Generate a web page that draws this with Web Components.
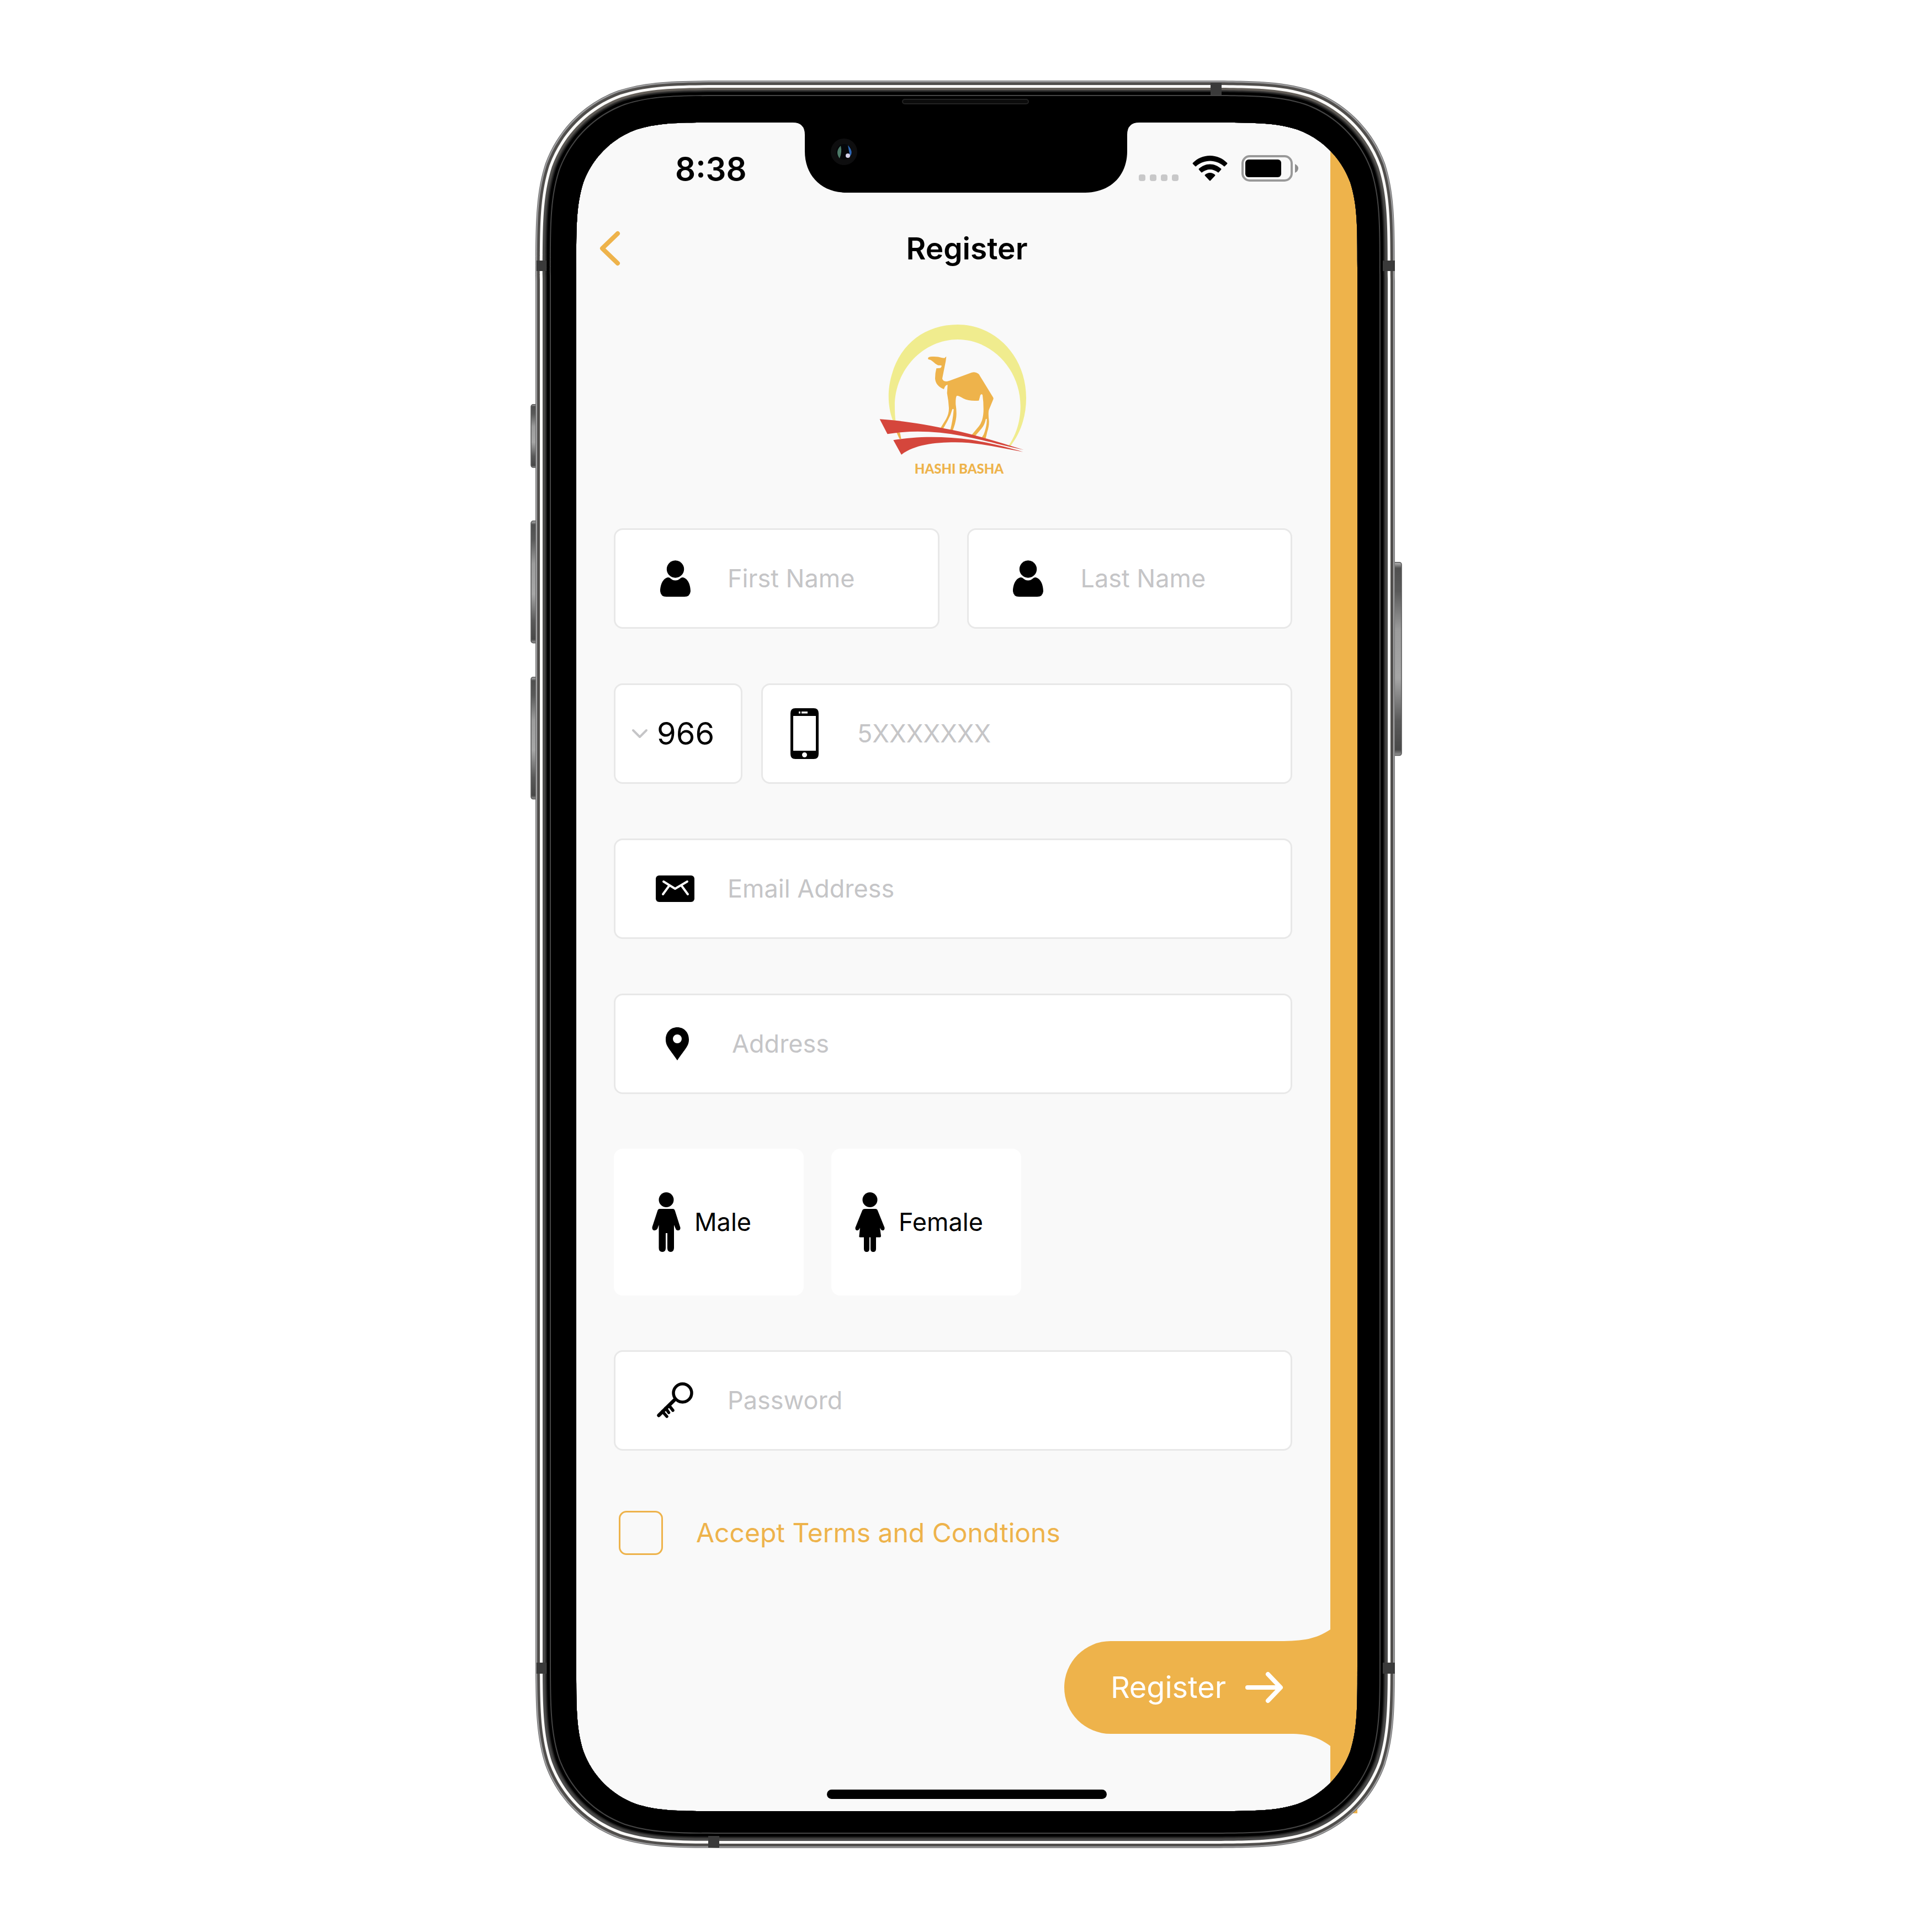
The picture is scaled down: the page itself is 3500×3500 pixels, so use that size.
<!DOCTYPE html>
<html lang="en">
<head>
<meta charset="utf-8">
<meta name="viewport" content="width=device-width, initial-scale=1">
<title>Register</title>
<style>
  body {
    margin: 0;
    padding: 146px 0;
    background: #fff;
    font-family: Inter, "Liberation Sans", sans-serif;
    color: #000;
    --accent: #eeb34b;
    --page: #f9f9f9;
    --line: #e8e8e8;
    --muted: #c5c5c7;
  }
</style>
</head>
<body>
<phone-frame>
  <status-bar time="8:38"></status-bar>
  <nav-bar heading="Register"></nav-bar>
  <register-form></register-form>
</phone-frame>

<script>
const define = (name, html, setup, attributes = []) => {
  const template = document.createElement('template');
  template.innerHTML = html;
  customElements.define(name, class extends HTMLElement {
    static observedAttributes = attributes;
    constructor() {
      super();
      this.attachShadow({ mode: 'open' }).append(template.content.cloneNode(true));
    }
    connectedCallback() { if (setup) setup(this, this.shadowRoot); }
    attributeChangedCallback() { if (this.isConnected) setup(this, this.shadowRoot); }
  });
};

/* Rounded rectangle with continuous-curvature corners. */
const smoothRect = (x0, y0, x1, y1, r) => {
  const corner = (cx, cy, sx, sy, reverse) => {
    const pts = [[1.5287, 0], [1.0885, 0], [.8684, 0], [.6315, .0749], [.3728, .1691], [.1691, .3728],
      [.0749, .6315], [0, .8684], [0, 1.0885], [0, 1.5287]]
      .map(([a, b]) => (cx + sx * a * r).toFixed(2) + ' ' + (cy + sy * b * r).toFixed(2));
    if (reverse) pts.reverse();
    return pts[0] + ' C' + pts.slice(1).join(' ');
  };
  return 'M' + corner(x0, y0, 1, 1, true) + ' L' + corner(x1, y0, -1, 1, false) +
    ' L' + corner(x1, y1, -1, -1, true) + ' L' + corner(x0, y1, 1, -1, false) + ' Z';
};
const W = 1557, H = 3203;
const shell = i => smoothRect(i, i, W - i, H - i, 238 - i * .89);
const glass = smoothRect(74, 76, 1489, 3136, 172);
const bands = [
  [0, '#6d6d6d'], [1, '#a2a2a4'], [3, '#5a5856'], [4, '#504e4c'], [8, '#fbfaf8'], [13, 'url(#metal)'],
  [17, '#3a3938'], [19, '#1c1c1c'], [21, '#000'], [26, '#454545'], [28, '#000']
];
const bezel = bands.map(([i, fill]) => `<path fill-rule="evenodd" fill="${fill}" d="${shell(i)} ${glass}"/>`).join('');
const key = (x, y, w, h) => `<rect x="${x}" y="${y}" width="${w}" height="${h}" rx="4" fill="url(#key)" stroke="#555" stroke-width="1.5"/>`;

define('phone-frame', `
<style>
  :host { display: block; position: relative; box-sizing: border-box; width: 1560px; max-width: 100%; margin: 0 auto; padding: 76px 71px 64px 74px; }
  .screen { display: flex; flex-direction: column; background: linear-gradient(to left, var(--accent) 49px, var(--page) 49px); }
  .home { align-self: center; width: 507px; height: 17px; border-radius: 9px; background: #000; margin: 101px 0 26px; }
  svg { position: absolute; inset: 0; width: 100%; height: 100%; overflow: visible; pointer-events: none; }
</style>
<div class="screen"><slot></slot><div class="home"></div></div>
<svg viewBox="0 0 1560 3204" preserveAspectRatio="none" aria-hidden="true">
  <defs>
    <linearGradient id="metal" x1="0" y1="0" x2="0" y2="1"><stop offset="0" stop-color="#635e58"/><stop offset=".07" stop-color="#4a4a49"/><stop offset="1" stop-color="#4a4a4a"/></linearGradient>
    <linearGradient id="key" x1="0" y1="0" x2="0" y2="1"><stop offset="0" stop-color="#bbb"/><stop offset=".03" stop-color="#505050"/><stop offset=".15" stop-color="#5a5a5a"/><stop offset=".35" stop-color="#9c9c9c"/><stop offset=".6" stop-color="#a6a6a6"/><stop offset=".82" stop-color="#5a5a5a"/><stop offset=".97" stop-color="#484848"/><stop offset="1" stop-color="#999"/></linearGradient>
  </defs>
  ${key(-8, 587, 14, 114)}${key(-8, 798, 14, 221)}${key(-8, 1081, 14, 221)}${key(1551, 873, 18, 350)}
  ${bezel}
  <g fill="#3a3a3a"><path d="M2 326h18v19H2zM1535 326h22v19h-22zM2 2867h18v20H2zM1535 2867h22v20h-22zM1223 4h20v22h-20zM313 3181h20v21h-20z"/></g>
  <path d="M466 70V76Q488 76 488 98V128C488 172 518 203 564 203H996C1042 203 1072 172 1072 128V98Q1072 76 1094 76V70Z"/>
  <rect x="665" y="34" width="228" height="8" rx="4" fill="#0c0c0c" stroke="#222" stroke-width="2"/>
  <circle cx="559" cy="129" r="24" fill="#0e0e0f"/><circle cx="559" cy="129" r="14" fill="#05070a"/>
  <path d="M553 118Q542 129 551 141Q556 129 553 118Z" fill="#4d7a68"/><path d="M566 117Q577 129 570 137Q568 128 566 117Z" fill="#2d66b4"/>
  <circle cx="566" cy="136" r="4" fill="#d6d2ea"/>
</svg>`);

define('status-bar', `
<style>
  :host { display: flex; justify-content: space-between; align-items: center; height: 168px; padding: 0 107px 0 179px; }
  time { font-size: 58px; font-weight: 600; line-height: 70px; }
  div { display: flex; align-items: center; gap: 25px; padding-bottom: 2px; }
  svg { display: block; }
</style>
<time></time>
<div>
  <svg width="72" height="46" viewBox="0 0 72 46" fill="#c8c8c9"><rect y="34" width="12" height="12" rx="4"/><rect x="20" y="34" width="12" height="12" rx="4"/><rect x="40" y="34" width="12" height="12" rx="4"/><rect x="60" y="34" width="12" height="12" rx="4"/></svg>
  <svg width="64" height="46" viewBox="0 0 64 46"><path d="M32 0C44 0 55 5 63 13Q64 14 63 15L59 19Q58 20 57 19C50 13 41 9.500 32 9.500S14 13 7 19Q6 20 5 19L1 15Q0 14 1 13C9 5 20 0 32 0ZM32 15.500C40 15.500 46 18.500 52 23.500Q53 24.500 52 25.500L48 30Q47 31 46 30C42 27 37 25 32 25S22 27 18 30Q17 31 16 30L12 25.500Q11 24.500 12 23.500C18 18.500 24 15.500 32 15.500ZM32 31Q37 31 41 34.500Q42 35.500 41 36.500L33 45Q32 46 31 45L23 36.500Q22 35.500 23 34.500Q27 31 32 31Z"/></svg>
  <svg width="103" height="48" viewBox="0 0 103 48"><rect x="2" y="2" width="89" height="44" rx="13" fill="none" stroke="#999" stroke-width="4"/><rect x="7" y="8" width="65" height="32" rx="6"/><path d="M97 16Q103 19 103 24T97 32Z" fill="#8e8e8e"/></svg>
</div>`, (el, root) => { root.querySelector('time').textContent = el.getAttribute('time'); });

define('nav-bar', `
<style>
  :host { display: grid; grid-template-columns: 1fr auto 1fr; align-items: center; height: 120px; padding: 0 41px; }
  button { justify-self: start; padding: 0; border: 0; background: none; cursor: pointer; }
  svg { display: block; }
  h1 { margin: 0; font-size: 55px; line-height: 66px; font-weight: 600; }
</style>
<button type="button" aria-label="Back"><svg width="40" height="66" viewBox="0 0 40 66"><path d="M34 6L6 33L34 60" fill="none" stroke="#eeb34b" stroke-width="8" stroke-linecap="round" stroke-linejoin="round"/></svg></button>
<h1></h1>`, (el, root) => { root.querySelector('h1').textContent = el.getAttribute('heading'); });

define('brand-logo', `
<style>
  :host { display: flex; flex-direction: column; align-items: center; gap: 13px; }
  svg { display: block; overflow: visible; }
  span { padding-left: 22px; font: 900 24px/24px Lato, sans-serif; color: var(--accent); }
</style>
<svg width="268" height="236" viewBox="99 87 804 708" aria-hidden="true">
  <path fill="#f0ec8e" d="M172 607C140 520 145 430 168 355C215 190 350 87 525 87C730 87 897 260 897 485C897 590 865 680 808 752L802 745C845 680 866 610 866 530C866 330 710 168 525 168S183 330 183 530C183 560 184 585 187 609Z"/>
  <path fill="#eeb34b" d="M192 672L211 674L218 709L208 707Z"/>
  <path fill="#eeb34b" d="M364 268Q366 262 385 261Q415 259 440 268L453 269L463 260L460 285L441 380Q444 396 466 396L480 392L600 348Q620 341 637 354Q642 358 647 368L717 482Q721 488 717 496L694 552Q690 570 695 612Q696 640 685 672L677 706L655 702Q668 685 672 668Q684 630 683 600Q679 598 677 602Q672 635 645 663L620 692L600 688L640 640Q662 612 665 560Q666 510 660 470Q656 462 648 470L640 500Q590 505 555 488Q530 472 520 474Q513 480 514 520Q520 560 517 590Q513 620 506 640L497 666L484 662Q500 600 503 548Q499 542 495 549Q487 580 470 610L444 656L430 652L462 600Q478 570 477 540Q475 500 467 460L470 415Q462 412 455 425L450 438Q405 420 402 380Q402 350 409 325L430 323Q440 318 436 309L418 308Q405 303 390 288Q380 278 364 275Z"/>
  <path fill="#d5463c" d="M101 601C250 612 350 630 500 661C620 686 760 728 884 768C760 742 660 712 550 692C410 664 260 660 143 682Z"/>
  <path fill="#d5463c" d="M175 715C300 693 450 693 600 713C700 731 800 755 880 779C750 757 640 727 510 727C400 727 290 740 219 794Z"/>
</svg>
<span>HASHI BASHA</span>`);

const icons = {
  person: [55, 66, '<circle cx="27.500" cy="16" r="15.700"/><path d="M14 31C19 31 20 36.500 27.500 36.500S36 31 41 31C51 33 55 46 55 56Q54 66 44 66H11Q1 66 0 56C0 46 4 33 14 31Z"/>'],
  phone: [51, 92, '<path fill-rule="evenodd" d="M9 0H42Q51 0 51 9V83Q51 92 42 92H9Q0 92 0 83V9Q0 0 9 0ZM5 14V77H46V14ZM20 6V9.500H31V6ZM15 6V9.500H18V6ZM25.500 80A4.500 4.500 0 1 0 25.500 89A4.500 4.500 0 1 0 25.500 80Z"/>'],
  mail: [70, 48, '<rect width="70" height="48" rx="6"/><path d="M14 11L35 24L57 11M24 19L13 34M47 19L58 34" fill="none" stroke="#fff" stroke-width="4" stroke-linecap="round" stroke-linejoin="round"/>'],
  pin: [42, 60, '<path fill-rule="evenodd" d="M21 0C9 0 0 9 0 22C0 34 6 38 21 60C36 38 42 34 42 22C42 9 33 0 21 0ZM21 13A8 8 0 1 1 21 29A8 8 0 1 1 21 13Z"/>'],
  key: [66, 66, '<g fill="none" stroke="#000" stroke-linecap="round"><circle cx="46.500" cy="19.500" r="16.500" stroke-width="5.500"/><path d="M33 31L3.500 60" stroke-width="6.500"/><path d="M22 42L29 51M16 47L21.500 55M10 53L18 62" stroke-width="5.500"/></g>'],
  male: [52, 108, '<circle cx="26" cy="13.500" r="13.500"/><path d="M14 30H38Q41 30 42 34L51.500 64Q52 69 47 69Q44 69 43 66L40 59V101Q39.500 108 34 108Q28 108 28 101V74H25V101Q25 108 19 108Q12.500 108 12.500 101V59L10 66Q8 69 5 69Q0 69 .5 63L10 34Q11 30 14 30Z"/>'],
  female: [54, 108, '<circle cx="27" cy="13.500" r="13.500"/><path d="M18 30H37Q40 30 41 33L53.500 64Q54 69 50 69Q47 69 45 64L47 79Q47 81.500 45 81.500H38V102Q38 108 33 108Q28 108 28 102V81.500H26V102Q26 108 21 108Q16 108 16 102V81.500H9Q7 81.500 7.500 79L9 64Q7 69 4 69Q0 69 .5 64L13 33Q14 30 18 30Z"/>'],
  arrow: [70, 58, '<path d="M5 29H64M42 5L65 29L42 53" fill="none" stroke="#fff" stroke-width="8" stroke-linecap="round" stroke-linejoin="round"/>'],
  chevron: [30, 18, '<path d="M3 3L15 15L27 3" fill="none" stroke="#c5c5c7" stroke-width="4" stroke-linecap="round" stroke-linejoin="round"/>']
};
define('app-icon', `
<style>:host { display: flex; justify-content: center; flex: none; } svg { display: block; }</style>
<span></span>`, (el, root) => {
  const icon = icons[el.getAttribute('name')];
  if (!icon) return;
  const [w, h, body] = icon;
  root.querySelector('span').innerHTML = `<svg width="${w}" height="${h}" viewBox="0 0 ${w} ${h}" aria-hidden="true">${body}</svg>`;
}, ['name']);

define('text-field', `
<style>
  :host { display: block; flex: 1 1 0; min-width: 0; --cell: 70px; --inset: 73px; --gap: 60px; }
  :host([icon=pin]) { --cell: 78px; }
  :host([icon=phone]) { --cell: 51px; --inset: 50px; --gap: 70px; }
  label { display: flex; align-items: center; gap: var(--gap); box-sizing: border-box; height: 182px; padding: 0 20px 0 var(--inset); border: 3px solid var(--line); border-radius: 16px; background: #fff; }
  app-icon { width: var(--cell); }
  input { flex: 1; min-width: 0; padding: 0; border: 0; outline: 0; background: none; color: #000; font: 400 45px/56px Inter, "Liberation Sans", sans-serif; }
  input::placeholder { color: var(--muted); opacity: 1; }
</style>
<label><app-icon></app-icon><input></label>`, (el, root) => {
  const input = root.querySelector('input');
  root.querySelector('app-icon').setAttribute('name', el.getAttribute('icon'));
  input.type = el.getAttribute('type') || 'text';
  input.placeholder = el.getAttribute('placeholder');
  input.setAttribute('aria-label', el.getAttribute('label') || input.placeholder);
});

define('code-select', `
<style>
  :host { display: block; flex: none; width: 233px; }
  label { display: flex; align-items: center; gap: 16px; box-sizing: border-box; height: 182px; padding: 0 20px 0 29px; border: 3px solid var(--line); border-radius: 16px; background: #fff; }
  select { appearance: none; flex: 1; min-width: 0; padding: 0; border: 0; outline: 0; background: none; color: #000; font: 400 56px/68px Inter, "Liberation Sans", sans-serif; }
</style>
<label><app-icon name="chevron"></app-icon><select aria-label="Country code"><option>966</option></select></label>`);

define('gender-option', `
<style>
  :host { display: block; flex: none; width: 344px; }
  label { display: flex; align-items: center; justify-content: center; gap: 25px; box-sizing: border-box; height: 266px; padding-right: 26px; border-radius: 16px; background: #fff; font-size: 45px; line-height: 56px; cursor: pointer; }
  input { appearance: none; position: absolute; margin: 0; width: 1px; height: 1px; opacity: 0; }
</style>
<label><input type="radio" name="gender"><app-icon></app-icon><span><slot></slot></span></label>`, (el, root) => {
  root.querySelector('app-icon').setAttribute('name', el.getAttribute('icon'));
});

define('terms-check', `
<style>
  :host { display: block; }
  label { display: flex; align-items: center; gap: 60px; padding-left: 9px; color: var(--accent); font-size: 48px; line-height: 60px; cursor: pointer; }
  input { appearance: none; flex: none; box-sizing: border-box; width: 80px; height: 80px; margin: 0; border: 3px solid var(--accent); border-radius: 14px; }
  input:checked { background: var(--accent); }
</style>
<label><input type="checkbox"><span><slot></slot></span></label>`);

define('submit-button', `
<style>
  :host { display: block; align-self: flex-end; }
  button { position: relative; display: flex; align-items: center; gap: 34px; height: 168px; padding: 0 134px 0 84px; border: 0; border-radius: 84px 0 0 84px; background: var(--accent); color: #fff; font: 400 54px/68px Inter, "Liberation Sans", sans-serif; cursor: pointer; }
  .flare { position: absolute; right: 49px; bottom: 100%; fill: var(--accent); }
  .flare.below { bottom: auto; top: 100%; }
</style>
<button type="submit">
  <svg class="flare" width="92" height="21" viewBox="0 0 92 21" aria-hidden="true"><path d="M0 21C44 21 66 17 92 0V21Z"/></svg>
  <slot></slot><app-icon name="arrow"></app-icon>
  <svg class="flare below" width="72" height="22" viewBox="0 0 72 22" aria-hidden="true"><path d="M0 0C32 0 52 7 72 22V0Z"/></svg>
</button>`);

define('register-form', `
<style>
  :host { display: block; }
  form { display: flex; flex-direction: column; }
  .fields { display: flex; flex-direction: column; gap: 99px; padding: 78px 118px 0 68px; }
  brand-logo { margin-bottom: -3px; }
  .row { display: flex; gap: 50px; }
  .row.tight { gap: 34px; }
  terms-check { margin-top: 10px; }
  submit-button { margin-top: 156px; }
</style>
<form>
  <div class="fields">
    <brand-logo></brand-logo>
    <div class="row"><text-field icon="person" placeholder="First Name"></text-field><text-field icon="person" placeholder="Last Name"></text-field></div>
    <div class="row tight"><code-select></code-select><text-field icon="phone" type="tel" label="Phone number" placeholder="5XXXXXXX"></text-field></div>
    <text-field icon="mail" type="email" placeholder="Email Address"></text-field>
    <text-field icon="pin" placeholder="Address"></text-field>
    <div class="row"><gender-option icon="male">Male</gender-option><gender-option icon="female">Female</gender-option></div>
    <text-field icon="key" type="password" placeholder="Password"></text-field>
    <terms-check>Accept Terms and Condtions</terms-check>
  </div>
  <submit-button>Register</submit-button>
</form>`);
</script>
</body>
</html>
